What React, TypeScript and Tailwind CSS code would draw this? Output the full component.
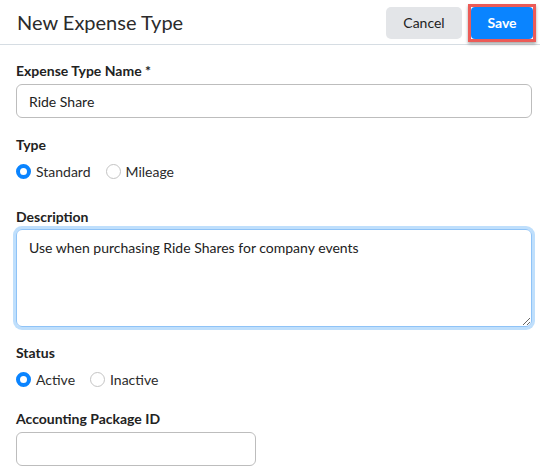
import { useState } from "react";

interface RadioProps {
  label: string;
  checked: boolean;
  onSelect: () => void;
}

function Radio({ label, checked, onSelect }: RadioProps) {
  return (
    <label className="flex items-center gap-[5px] cursor-pointer" onClick={onSelect}>
      <span
        className={
          checked
            ? "w-[15px] h-[15px] rounded-full border-[4px] border-[#0a84ff] bg-white"
            : "w-[15px] h-[15px] rounded-full border border-[#c4c4c4] bg-white"
        }
      />
      <span className="text-[14px] text-[#2b2b2b]">{label}</span>
    </label>
  );
}

export default function App() {
  const [name, setName] = useState<string>("Ride Share");
  const [type, setType] = useState<"standard" | "mileage">("standard");
  const [description, setDescription] = useState<string>(
    "Use when purchasing Ride Shares for company events"
  );
  const [status, setStatus] = useState<"active" | "inactive">("active");
  const [packageId, setPackageId] = useState<string>("");

  return (
    <div className="w-[540px] h-[476px] bg-white text-[#222] font-['Lato','Noto_Sans',sans-serif] overflow-hidden">
      {/* header */}
      <div className="h-[45px] flex items-center justify-between border-b border-[#d6dde3] pl-[17px] pr-[4px]">
        <h1 className="text-[20px] text-[#2b2b2b] leading-none">New Expense Type</h1>
        <div className="flex items-center gap-[6px] pt-[1px]">
          <button
            type="button"
            className="h-[32px] w-[76px] rounded-[5px] bg-[#e3e5e8] text-[14px] text-[#222]"
          >
            Cancel
          </button>
          {/* highlighted save action */}
          <span className="block border-[3px] border-[#ec5b57] shadow-[0_2px_3px_rgba(0,0,0,0.35)]">
            <button
              type="submit"
              className="block h-[32px] w-[62px] rounded-[4px] bg-[#0a84ff] text-[14px] font-bold text-white"
            >
              Save
            </button>
          </span>
        </div>
      </div>

      {/* form */}
      <form className="pt-[16px] pl-[16px] pr-[8px]">
        <label className="block text-[14px] font-bold leading-[20px] text-[#222]">
          Expense Type Name *
        </label>
        <input
          type="text"
          value={name}
          onChange={(e) => setName(e.target.value)}
          className="mt-[3px] block w-[516px] h-[34px] rounded-[6px] border border-[#bdbdbd] px-[12px] text-[14px] text-[#222] outline-none"
        />

        <div className="mt-[17px] text-[14px] font-bold leading-[20px]">Type</div>
        <div className="mt-[6px] flex items-center gap-[15px] h-[20px]">
          <Radio label="Standard" checked={type === "standard"} onSelect={() => setType("standard")} />
          <Radio label="Mileage" checked={type === "mileage"} onSelect={() => setType("mileage")} />
        </div>

        <div className="mt-[26px] text-[14px] font-bold leading-[20px]">Description</div>
        <textarea
          value={description}
          onChange={(e) => setDescription(e.target.value)}
          className="mt-[2px] block w-[516px] h-[98px] rounded-[6px] border border-[#8fc3f7] px-[12px] py-[8px] text-[14px] leading-[20px] text-[#222] outline-none ring-[3px] ring-[#bfdffc]"
        />

        <div className="mt-[16px] text-[14px] font-bold leading-[20px]">Status</div>
        <div className="mt-[6px] flex items-center gap-[15px] h-[20px]">
          <Radio label="Active" checked={status === "active"} onSelect={() => setStatus("active")} />
          <Radio label="Inactive" checked={status === "inactive"} onSelect={() => setStatus("inactive")} />
        </div>

        <div className="mt-[20px] text-[14px] font-bold leading-[20px]">Accounting Package ID</div>
        <input
          type="text"
          value={packageId}
          onChange={(e) => setPackageId(e.target.value)}
          className="mt-[3px] block w-[240px] h-[34px] rounded-[6px] border border-[#bdbdbd] px-[12px] text-[14px] outline-none"
        />
      </form>
    </div>
  );
}
